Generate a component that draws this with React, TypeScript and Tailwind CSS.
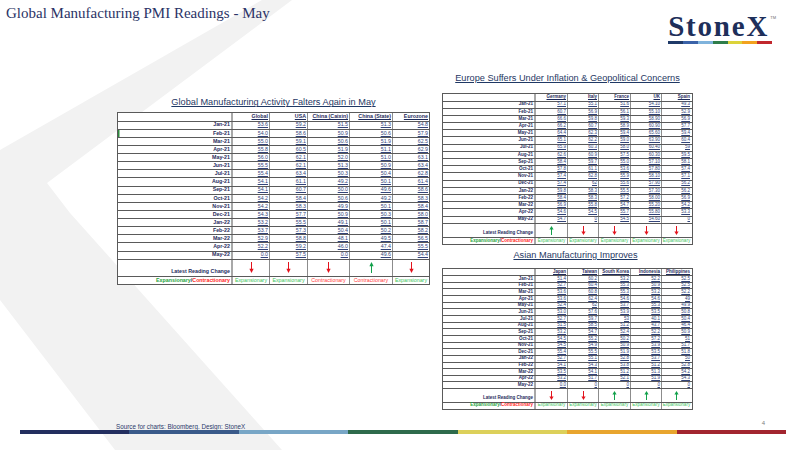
import React from 'react';

type Dir = 'up' | 'down';
type Spec = {
  cols: string[];
  rows: string[][];
  arrows: Dir[];
  status: ('E' | 'C')[];
  widths: string[];
  head: string;
  row: string;
  arrow: string;
  exp: string;
  text: string;
  arrowH: number;
  mark?: boolean;
};

const globalTable: Spec = {
  cols: ['Global', 'USA', 'China (Caixin)', 'China (State)', 'Eurozone'],
  rows: [
    ['Jan-21', '53.6', '59.2', '51.5', '51.3', '54.8'],
    ['Feb-21', '54.0', '58.6', '50.9', '50.6', '57.9'],
    ['Mar-21', '55.0', '59.1', '50.6', '51.9', '62.5'],
    ['Apr-21', '55.8', '60.5', '51.9', '51.1', '62.9'],
    ['May-21', '56.0', '62.1', '52.0', '51.0', '63.1'],
    ['Jun-21', '55.5', '62.1', '51.3', '50.9', '63.4'],
    ['Jul-21', '55.4', '63.4', '50.3', '50.4', '62.8'],
    ['Aug-21', '54.1', '61.1', '49.2', '50.1', '61.4'],
    ['Sep-21', '54.1', '60.7', '50.0', '49.6', '58.6'],
    ['Oct-21', '54.2', '58.4', '50.6', '49.2', '58.3'],
    ['Nov-21', '54.2', '58.3', '49.9', '50.1', '58.4'],
    ['Dec-21', '54.3', '57.7', '50.9', '50.3', '58.0'],
    ['Jan-22', '53.2', '55.5', '49.1', '50.1', '58.7'],
    ['Feb-22', '53.7', '57.3', '50.4', '50.2', '58.2'],
    ['Mar-22', '52.9', '58.8', '48.1', '49.5', '56.5'],
    ['Apr-22', '52.2', '59.2', '46.0', '47.4', '55.5'],
    ['May-22', '0.0', '57.5', '0.0', '49.6', '54.4'],
  ],
  arrows: ['down', 'down', 'down', 'up', 'down'],
  status: ['E', 'E', 'C', 'C', 'E'],
  widths: ['w-[115px]', 'w-[37px]', 'w-[38px]', 'w-[42px]', 'w-[43px]', 'w-[36px]'],
  head: 'h-[8.5px]',
  row: 'h-[8.14px]',
  arrow: 'h-[17px]',
  exp: 'h-[7.5px]',
  text: 'text-[5.3px]',
  arrowH: 11,
  mark: true,
};

const europeTable: Spec = {
  cols: ['Germany', 'Italy', 'France', 'UK', 'Spain'],
  rows: [
    ['Jan-21', '57.1', '55.1', '51.6', '54.10', '49.3'],
    ['Feb-21', '60.7', '56.9', '56.1', '55.10', '52.9'],
    ['Mar-21', '66.6', '59.8', '59.3', '58.90', '56.9'],
    ['Apr-21', '66.2', '60.7', '58.9', '60.90', '57.7'],
    ['May-21', '64.4', '62.3', '59.4', '65.60', '59.4'],
    ['Jun-21', '65.1', '62.2', '59.0', '63.90', '60.4'],
    ['Jul-21', '65.9', '60.3', '58.0', '60.40', '59'],
    ['Aug-21', '62.6', '60.9', '57.5', '60.30', '59.5'],
    ['Sep-21', '58.4', '59.7', '55.0', '57.10', '58.1'],
    ['Oct-21', '57.8', '61.1', '53.6', '57.80', '57.4'],
    ['Nov-21', '57.4', '62.8', '55.9', '58.10', '57.1'],
    ['Dec-21', '57.4', '62', '55.6', '57.90', '56.2'],
    ['Jan-22', '59.8', '58.3', '55.5', '57.30', '56.2'],
    ['Feb-22', '58.4', '58.3', '57.2', '58.00', '56.9'],
    ['Mar-22', '56.9', '55.8', '54.7', '55.20', '54.2'],
    ['Apr-22', '54.6', '54.5', '55.7', '55.80', '53.3'],
    ['May-22', '54.7', '0', '54.5', '54.60', '0'],
  ],
  arrows: ['up', 'down', 'down', 'down', 'down'],
  status: ['E', 'E', 'E', 'E', 'E'],
  widths: ['w-[93px]', 'w-[32px]', 'w-[31px]', 'w-[32px]', 'w-[31px]', 'w-[29px]'],
  head: 'h-[7.5px]',
  row: 'h-[7.2px]',
  arrow: 'h-[14px]',
  exp: 'h-[6.5px]',
  text: 'text-[4.5px]',
  arrowH: 9,
};

const asiaTable: Spec = {
  cols: ['Japan', 'Taiwan', 'South Korea', 'Indonesia', 'Philippines'],
  rows: [
    ['Jan-21', '51.4', '60.2', '53.2', '52.2', '52.5'],
    ['Feb-21', '52.7', '60.4', '55.3', '50.9', '52.5'],
    ['Mar-21', '53.6', '60.8', '55.3', '53.2', '52.2'],
    ['Apr-21', '53.6', '62.4', '54.6', '54.6', '49'],
    ['May-21', '52.4', '62', '53.7', '55.3', '49.9'],
    ['Jun-21', '53.0', '57.6', '53.9', '53.5', '50.8'],
    ['Jul-21', '52.7', '59.7', '53', '40.1', '50.4'],
    ['Aug-21', '51.5', '58.5', '51.2', '43.7', '46.4'],
    ['Sep-21', '53.2', '54.7', '52.4', '52.2', '50.9'],
    ['Oct-21', '54.5', '55.2', '50.2', '57.2', '51'],
    ['Nov-21', '54.5', '54.9', '50.9', '53.9', '51.7'],
    ['Dec-21', '55.4', '55.5', '51.9', '53.5', '51.8'],
    ['Jan-22', '52.7', '55.1', '52.8', '53.7', '50'],
    ['Feb-22', '54.1', '54.3', '53.8', '51.2', '52.8'],
    ['Mar-22', '53.5', '54.1', '51.2', '51.3', '54.2'],
    ['Apr-22', '53.2', '51.7', '52.1', '51.9', '54.3'],
    ['May-22', '0.0', '0', '0', '0', '0'],
  ],
  arrows: ['down', 'down', 'up', 'up', 'up'],
  status: ['E', 'E', 'E', 'E', 'E'],
  widths: ['w-[93px]', 'w-[32px]', 'w-[31px]', 'w-[32px]', 'w-[31px]', 'w-[29px]'],
  head: 'h-[7px]',
  row: 'h-[6.65px]',
  arrow: 'h-[13.5px]',
  exp: 'h-[6px]',
  text: 'text-[4.5px]',
  arrowH: 9,
};

const Arrow = ({ dir, h }: { dir: Dir; h: number }) => {
  const c = dir === 'up' ? '#12a14b' : '#e3131c';
  return (
    <svg width="5" height={h} viewBox="0 0 5 11" preserveAspectRatio="none">
      {dir === 'down' ? (
        <>
          <rect x="2" y="0" width="1" height="7.5" fill={c} />
          <polygon points="0.4,6.8 4.6,6.8 2.5,11" fill={c} />
        </>
      ) : (
        <>
          <rect x="2" y="3.5" width="1" height="7.5" fill={c} />
          <polygon points="0.4,4.2 4.6,4.2 2.5,0" fill={c} />
        </>
      )}
    </svg>
  );
};

function Table({ s }: { s: Spec }) {
  const [lw, ...cw] = s.widths;
  const sep = (i: number) => (i < 4 ? 'border-r border-[#8c8c8c]' : '');
  return (
    <div className={`flex flex-col border border-[#5a5a5a] bg-white leading-none ${s.text} font-['Liberation_Sans',Arial,sans-serif]`}>
      <div className={`flex ${s.head} border-b border-[#5a5a5a]`}>
        <div className={`${lw} border-r-2 border-[#a8a8a8]`} />
        {s.cols.map((c, i) => (
          <div
            key={c}
            className={`${cw[i]} flex items-center justify-end pr-[1px] whitespace-nowrap font-bold text-[#1f2c5c] underline decoration-[0.4px] underline-offset-[0.6px] ${sep(i)}`}
          >
            {c}
          </div>
        ))}
      </div>
      {s.rows.map(([label, ...vals], r) => (
        <div key={label} className={`flex ${s.row} border-b border-[#5a5a5a]`}>
          <div
            className={`${lw} flex items-center justify-end pr-[1px] font-bold text-[#1f2c5c] border-r-2 border-[#a8a8a8] ${
              s.mark && r === 1 ? 'shadow-[inset_1.5px_0_0_#2e8b3e]' : ''
            }`}
          >
            {label}
          </div>
          {vals.map((v, i) => (
            <div
              key={i}
              className={`${cw[i]} flex items-center justify-end pr-[1px] text-[#34457a] underline decoration-[0.4px] underline-offset-[0.6px] ${sep(i)}`}
            >
              {v}
            </div>
          ))}
        </div>
      ))}
      <div className={`flex ${s.arrow} border-b border-[#5a5a5a]`}>
        <div className={`${lw} flex items-end justify-end pr-[1px] pb-[1px] font-bold text-[#1f2c5c] border-r-2 border-[#a8a8a8]`}>
          Latest Reading Change
        </div>
        {s.arrows.map((d, i) => (
          <div key={i} className={`${cw[i]} flex items-center justify-center ${sep(i)}`}>
            <Arrow dir={d} h={s.arrowH} />
          </div>
        ))}
      </div>
      <div className={`flex ${s.exp}`}>
        <div className={`${lw} flex items-center justify-end pr-[1px] font-bold whitespace-nowrap border-r-2 border-[#a8a8a8]`}>
          <span className="text-[#1fa33c]">Expansionary</span>
          <span className="text-[#1f2c5c]">/</span>
          <span className="text-[#ff1d1d]">Contractionary</span>
        </div>
        {s.status.map((st, i) => (
          <div
            key={i}
            className={`${cw[i]} flex items-center justify-center whitespace-nowrap overflow-hidden ${
              st === 'E' ? 'text-[#3cc45a]' : 'text-[#ff3c3c]'
            } ${sep(i)}`}
          >
            {st === 'E' ? 'Expansionary' : 'Contractionary'}
          </div>
        ))}
      </div>
    </div>
  );
}

const Title = ({ children, extra = '' }: { children: React.ReactNode; extra?: string }) => (
  <div
    className={`h-[12px] flex items-center justify-center text-[9.2px] leading-none text-[#1f3864] underline decoration-[0.6px] underline-offset-[1px] whitespace-nowrap font-['Liberation_Sans',Arial,sans-serif] ${extra}`}
  >
    {children}
  </div>
);

export default function App() {
  return (
    <div className="relative w-[800px] h-[450px] bg-white overflow-hidden">
      <svg className="absolute inset-0" width="800" height="450" viewBox="0 0 800 450">
        <polygon points="262,0 292,0 47,183 70,213 282,450 115,450 0,300 0,150" fill="#f2f2f2" />
      </svg>

      <div className="relative flex flex-col h-full">
        <div className="flex justify-between items-start h-[46px]">
          <div className="pl-[6px] pt-[4px] text-[15px] leading-[18px] text-[#2b3366] font-['Liberation_Serif','Times_New_Roman',serif]">
            Global Manufacturing PMI Readings - May
          </div>
          <div className="mr-[24px] mt-[12px] flex flex-col">
            <div className="flex items-start">
              <span className="text-[29px] leading-[28px] font-bold tracking-[1.8px] text-[#1e2f5a] font-['Liberation_Serif','Times_New_Roman',serif]">
                StoneX
              </span>
              <span className="ml-[1px] mt-[4px] text-[4px] leading-none text-[#6a6a6a] font-['Liberation_Sans',Arial,sans-serif]">TM</span>
            </div>
            <div className="mt-[1px] flex w-[104px] h-[3px]">
              <div className="flex-1 bg-[#1f3a68]" />
              <div className="flex-1 bg-[#3a62a8]" />
              <div className="flex-1 bg-[#7fb3dc]" />
              <div className="flex-1 bg-[#2e7d4a]" />
              <div className="flex-1 bg-[#dcd33a]" />
              <div className="flex-1 bg-[#f2a21e]" />
              <div className="flex-1 bg-[#c1272d]" />
            </div>
          </div>
        </div>

        <div className="flex items-start h-[374px]">
          <div className="ml-[117px] mt-[51px] w-[313px] flex flex-col">
            <Title>Global Manufacturing Activity Falters Again in May</Title>
            <div className="mt-[3px]">
              <Table s={globalTable} />
            </div>
          </div>
          <div className="ml-[12px] mt-[27px] w-[251px] flex flex-col">
            <Title>Europe Suffers Under Inflation &amp; Geopolitical Concerns</Title>
            <div className="mt-[8px]">
              <Table s={europeTable} />
            </div>
            <Title extra="mt-[4px] pl-[16px]">Asian Manufacturing Improves</Title>
            <div className="mt-[7px]">
              <Table s={asiaTable} />
            </div>
          </div>
        </div>

        <div className="flex flex-col">
          <div className="flex justify-between items-end h-[10px]">
            <span className="ml-[116px] text-[6.3px] leading-none text-[#2b3a6b] font-['Liberation_Sans',Arial,sans-serif]">
              Source for charts: Bloomberg. Design: StoneX
            </span>
            <span className="mr-[35px] mb-[4px] text-[6px] leading-none text-[#808080] font-['Liberation_Sans',Arial,sans-serif]">4</span>
          </div>
          <div className="ml-[20px] flex w-[766px] h-[4px]">
            <div className="flex-1 bg-[#232e5f]" />
            <div className="flex-1 bg-[#3a5a8a]" />
            <div className="flex-1 bg-[#78a6c6]" />
            <div className="flex-1 bg-[#2e6b4c]" />
            <div className="flex-1 bg-[#dcd05a]" />
            <div className="flex-1 bg-[#e8a52e]" />
            <div className="flex-1 bg-[#a2252f]" />
          </div>
        </div>
      </div>
    </div>
  );
}
